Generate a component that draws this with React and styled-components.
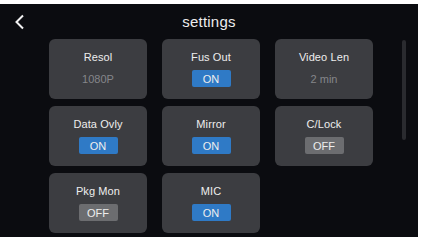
import React from "react";
import styled, { createGlobalStyle } from "styled-components";

const GlobalStyle = createGlobalStyle`
  html, body {
    margin: 0;
    padding: 0;
    background: #ffffff;
  }
  body {
    font-family: "Liberation Sans", Arial, sans-serif;
  }
`;

const Screen = styled.div`
  margin-top: 4px;
  width: 418px;
  height: 233px;
  background: #0b0c10;
  display: flex;
  flex-direction: column;
  overflow: hidden;
`;

const Header = styled.header`
  height: 35px;
  display: flex;
  align-items: center;
  justify-content: center;
  position: relative;
`;

const BackButton = styled.button`
  position: absolute;
  left: 11px;
  top: 8px;
  width: 18px;
  height: 20px;
  padding: 0;
  border: none;
  background: transparent;
  display: flex;
  align-items: center;
  justify-content: center;
`;

const Title = styled.h1`
  margin: 0;
  font-size: 15px;
  font-weight: 400;
  color: #ededed;
  letter-spacing: 0.2px;
`;

const Body = styled.div`
  display: flex;
  flex-direction: row;
  padding-left: 49px;
`;

const Grid = styled.div`
  display: grid;
  grid-template-columns: repeat(3, 98px);
  grid-auto-rows: 60px;
  column-gap: 15px;
  row-gap: 7px;
`;

const Card = styled.div`
  background: #3c3d41;
  border-radius: 6px;
  display: flex;
  flex-direction: column;
  align-items: center;
  padding-top: 12px;
  box-sizing: border-box;
`;

const Label = styled.span`
  font-size: 11px;
  color: #eeeeee;
  line-height: 12px;
  height: 12px;
  letter-spacing: 0.1px;
`;

const Value = styled.span`
  margin-top: 10px;
  font-size: 11px;
  color: #85868a;
  line-height: 12px;
`;

const Toggle = styled.span`
  margin-top: 7px;
  width: 39px;
  height: 17px;
  border-radius: 2px;
  display: flex;
  align-items: center;
  justify-content: center;
  font-size: 11px;
  color: #eeeeee;
  background: ${({ $on }) => ($on ? "#2f7ac6" : "#6c6d70")};
`;

const ScrollTrack = styled.div`
  margin-left: 29px;
  margin-top: 1px;
  width: 4px;
  height: 100px;
  border-radius: 2px;
  background: #2a2b2f;
`;

const items = [
  { label: "Resol", value: "1080P" },
  { label: "Fus Out", on: true },
  { label: "Video Len", value: "2 min" },
  { label: "Data Ovly", on: true },
  { label: "Mirror", on: true },
  { label: "C/Lock", on: false },
  { label: "Pkg Mon", on: false },
  { label: "MIC", on: true },
];

export default function App() {
  return (
    <>
      <GlobalStyle />
      <Screen>
        <Header>
          <BackButton aria-label="back">
            <svg width="12" height="16" viewBox="0 0 12 16">
              <path d="M9 1.5 L2.5 8 L9 14.5" fill="none" stroke="#f2f2f2" strokeWidth="2" />
            </svg>
          </BackButton>
          <Title>settings</Title>
        </Header>
        <Body>
          <Grid>
            {items.map((it) => (
              <Card key={it.label}>
                <Label>{it.label}</Label>
                {it.value ? (
                  <Value>{it.value}</Value>
                ) : (
                  <Toggle $on={it.on}>{it.on ? "ON" : "OFF"}</Toggle>
                )}
              </Card>
            ))}
          </Grid>
          <ScrollTrack />
        </Body>
      </Screen>
    </>
  );
}
